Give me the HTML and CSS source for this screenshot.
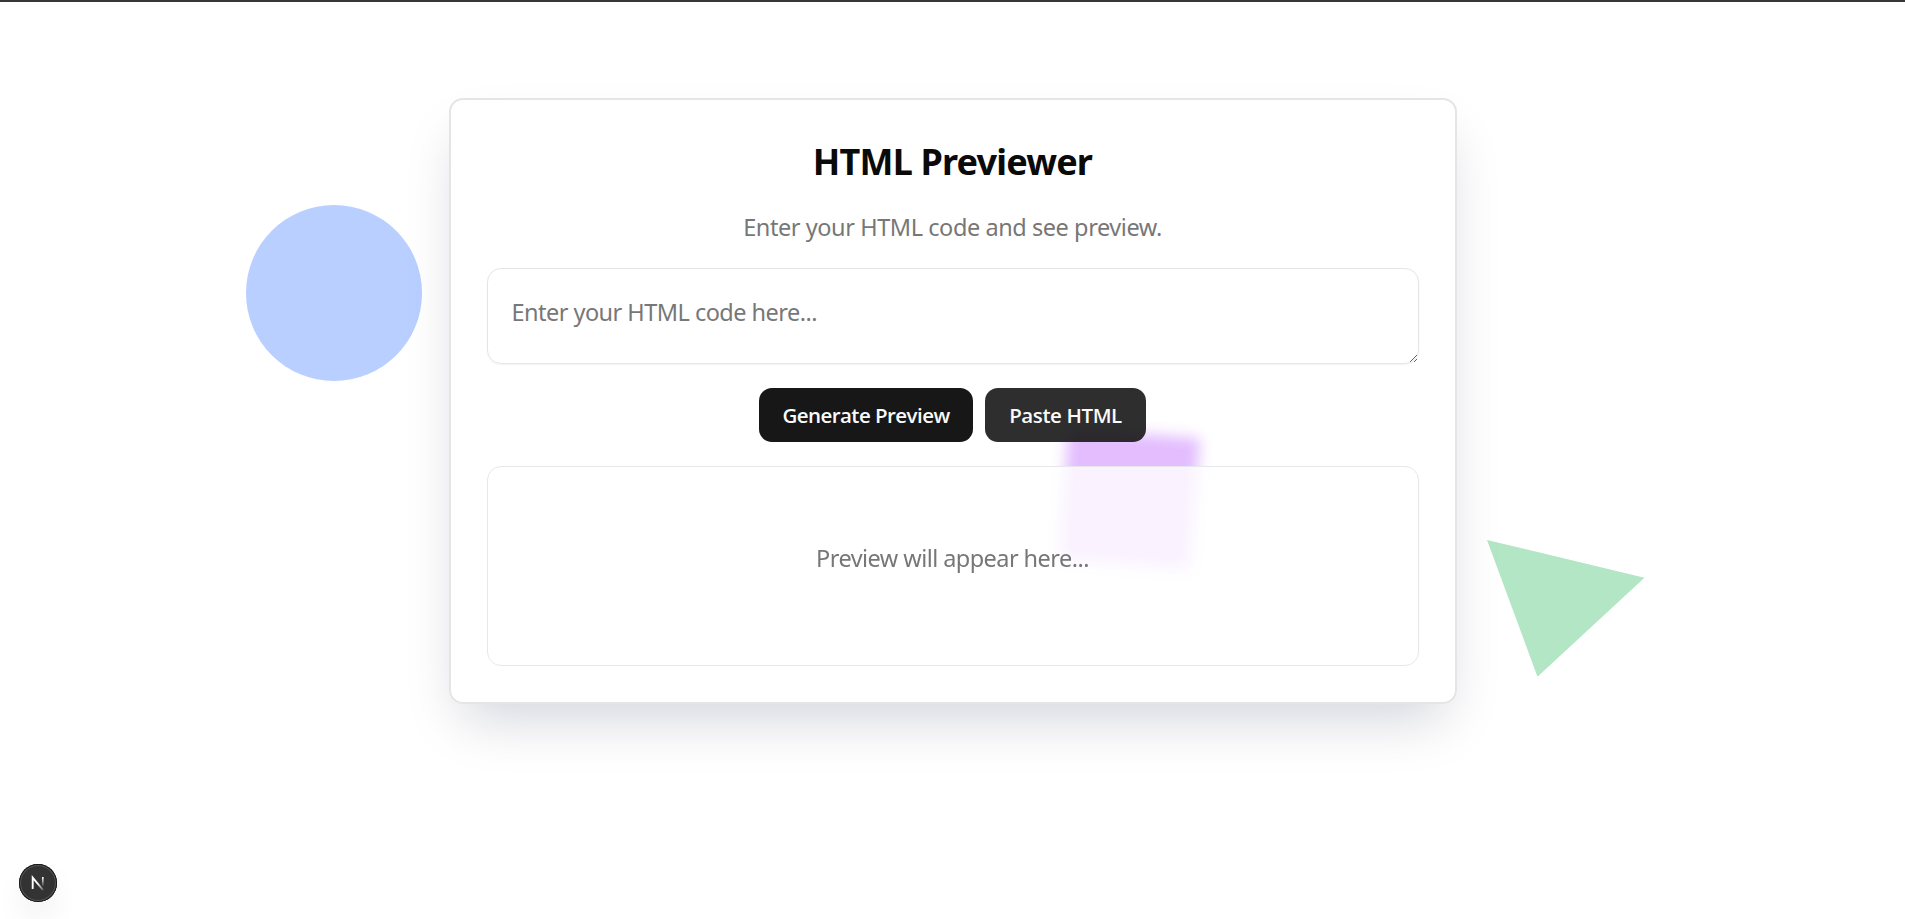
FILE: index.html
```html
<!DOCTYPE html>
<html lang="en">
<head>
<meta charset="utf-8">
<title>HTML Previewer</title>
<link rel="stylesheet" href="styles.css">
</head>
<body>
<div class="shapes">
<div class="circle"></div>
<div class="square"></div>
<svg class="triangle" width="158" height="137" viewBox="0 0 158 137"><path d="M0 0 157.5 37.7 50.5 136.7Z" fill="#b3e6c5"/></svg>
</div>
<main class="card">
<h1 class="title">HTML Previewer</h1>
<p class="subtitle">Enter your HTML code and see preview.</p>
<textarea class="code" placeholder="Enter your HTML code here..."></textarea>
<div class="actions">
<button class="button primary">Generate Preview</button>
<button class="button secondary">Paste HTML</button>
</div>
<section class="preview"><p class="empty">Preview will appear here...</p></section>
</main>
<div class="badge"><svg width="38" height="38" viewBox="0 0 38 38"><defs><linearGradient id="s" x1="0" y1="13" x2="0" y2="23" gradientUnits="userSpaceOnUse"><stop stop-color="#fff"/><stop offset="1" stop-color="#fff" stop-opacity="0"/></linearGradient><linearGradient id="d" x1="19" y1="19" x2="25" y2="26" gradientUnits="userSpaceOnUse"><stop stop-color="#fff"/><stop offset="1" stop-color="#fff" stop-opacity="0.2"/></linearGradient></defs><path d="M13.7 25V13.7L24 26" fill="none" stroke="url(#d)" stroke-width="1.9"/><path d="M23.8 13V22" stroke="url(#s)" stroke-width="1.7"/></svg></div>
</body>
</html>
```
FILE: styles.css
```css
* { box-sizing: border-box; }
body {
  margin: 0;
  height: 919px;
  padding-top: 96px;
  border-top: 2px solid #383638;
  background: #fff;
  overflow: hidden;
  font-family: "Noto Sans", "Open Sans", sans-serif;
}
.circle, .square, .triangle { position: absolute; }
.circle { left: 246px; top: 204.5px; width: 176px; height: 176px; border-radius: 50%; background: #b8cfff; }
.square { left: 1063px; top: 433px; width: 132px; height: 132px; background: #e3bdfe; transform: rotate(4.5deg); filter: blur(7px); }
.triangle { left: 1486.7px; top: 539.7px; }
.card {
  position: relative;
  width: 1008px;
  height: 606px;
  margin: 0 auto;
  padding: 36px;
  border: 2px solid #e5e5e5;
  border-radius: 14px;
  box-shadow: 0 27px 55px -13px rgba(2, 17, 57, 0.18);
  display: flex;
  flex-direction: column;
  text-align: center;
}
.title { margin: 0; font-size: 36px; line-height: 52px; font-weight: 700; letter-spacing: -0.82px; color: #0a0a0a; }
.subtitle { margin: 21px 0 0; font-size: 23.5px; line-height: 36px; letter-spacing: -0.43px; color: #777; }
.code {
  width: 100%;
  height: 96px;
  margin-top: 23px;
  padding: 25px 24px;
  border: 1px solid #e5e5e5;
  border-radius: 14px;
  background: transparent;
  box-shadow: 0 1px 2px rgba(0, 0, 0, 0.05);
  font: 23.5px/36px "Noto Sans", "Open Sans", sans-serif;
  letter-spacing: -0.53px;
  resize: vertical;
  flex: none;
}
.code::placeholder { color: #777; }
.actions { display: flex; justify-content: center; gap: 12px; margin-top: 24px; }
.button {
  height: 54px;
  padding: 1px 0 0;
  border: 0;
  border-radius: 13px;
  color: #fafafa;
  font: 600 20.5px/53px "Open Sans", "Noto Sans", sans-serif;
  letter-spacing: -0.55px;
}
.primary { width: 214px; background: #171717; }
.secondary { width: 161px; background: rgba(23, 23, 23, 0.9); letter-spacing: -0.4px; }
.preview {
  height: 200px;
  margin-top: 24px;
  border: 1px solid #e5e7eb;
  border-radius: 14px;
  background: rgba(255, 255, 255, 0.8);
  backdrop-filter: blur(4px);
  display: flex;
  justify-content: center;
}
.empty { margin: 73px 0 0; font-size: 23.5px; line-height: 36px; letter-spacing: -0.56px; color: #777; }
.badge {
  position: absolute;
  left: 19px;
  top: 864px;
  width: 38px;
  height: 38px;
  border-radius: 50%;
  background: #333;
  box-shadow: inset 0 0 0 1px #171717, inset 0 0 0 2px #565656, 0 16px 32px -8px rgba(0, 0, 0, 0.16);
}
.badge svg { display: block; }
```
